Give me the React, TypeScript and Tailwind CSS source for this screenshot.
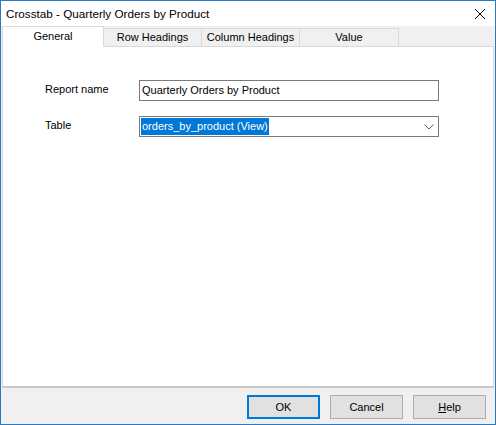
import { useState } from "react";

const tabs = ["General", "Row Headings", "Column Headings", "Value"];

function Chevron() {
    return (
        <svg width="10" height="6" viewBox="0 0 10 6" className="text-[#606060]">
            <path d="M0.5 0.5 L5 5 L9.5 0.5" fill="none" stroke="currentColor" strokeWidth="1" />
        </svg>
    );
}

function CloseIcon() {
    return (
        <svg width="10" height="10" viewBox="0 0 10 10">
            <path d="M0 0 L10 10 M10 0 L0 10" stroke="#000" strokeWidth="1" />
        </svg>
    );
}

function Button({ label, primary }: { label: React.ReactNode; primary?: boolean }) {
    return (
        <button
            type="button"
            className={
                primary
                    ? "w-[73px] h-[24px] bg-[#e1e1e1] border-2 border-[#0078d7] text-[11px] text-black"
                    : "w-[73px] h-[24px] bg-[#e1e1e1] border border-[#adadad] text-[11px] text-black"
            }
        >
            {label}
        </button>
    );
}

export default function App() {
    const [active, setActive] = useState(0);

    return (
        <div
            className="w-[496px] h-[425px] border border-[#2b79c2] bg-[#f0f0f0] flex flex-col text-black select-none"
            style={{ fontFamily: '"Liberation Sans", Arial, sans-serif' }}
        >
            <div className="h-[25px] bg-white flex items-center justify-between pl-[5px] pr-[10px]">
                <span className="text-[11.7px]">Crosstab - Quarterly Orders by Product</span>
                <CloseIcon />
            </div>

            <div className="h-[20px] flex items-end pl-[1px]">
                {tabs.map((tab, i) =>
                    i === active ? (
                        <div
                            key={tab}
                            onClick={() => setActive(i)}
                            className="w-[102px] h-[21px] -mb-px bg-white border border-b-0 border-[#d9d9d9] flex items-center justify-center text-[11px] pb-[2px] relative z-10"
                        >
                            {tab}
                        </div>
                    ) : (
                        <div
                            key={tab}
                            onClick={() => setActive(i)}
                            className={
                                "h-[18px] border border-b-0 border-[#d9d9d9] -ml-px flex items-center justify-center text-[11px] " +
                                (i === 3 ? "w-[100px]" : "w-[99px]")
                            }
                        >
                            {tab}
                        </div>
                    )
                )}
            </div>

            <div className="h-[342px] ml-[1px] mr-[1px] bg-white border border-[#d9d9d9] border-b-2 border-b-[#c8c8c8] pt-[33px] pl-[42px] flex flex-col gap-[15px]">
                <div className="flex items-center">
                    <span className="w-[94px] text-[11px] pb-[3px]">Report name</span>
                    <div className="w-[300px] h-[21px] border border-[#7a7a7a] flex items-center px-[2px] text-[11px]">
                        Quarterly Orders by Product
                    </div>
                </div>
                <div className="flex items-center">
                    <span className="w-[94px] text-[11px] pb-[3px]">Table</span>
                    <div className="w-[300px] h-[21px] border border-[#7a7a7a] flex items-center justify-between pl-[1px] pr-[4px] text-[11px]">
                        <span className="bg-[#0078d7] text-white leading-[17px] px-[1px]">orders_by_product (View)</span>
                        <Chevron />
                    </div>
                </div>
            </div>

            <div className="flex-1 flex justify-end items-start gap-[10px] pt-[7px] pr-[9px]">
                <Button label="OK" primary />
                <Button label="Cancel" />
                <Button
                    label={
                        <span>
                            <span className="underline">H</span>elp
                        </span>
                    }
                />
            </div>
        </div>
    );
}
